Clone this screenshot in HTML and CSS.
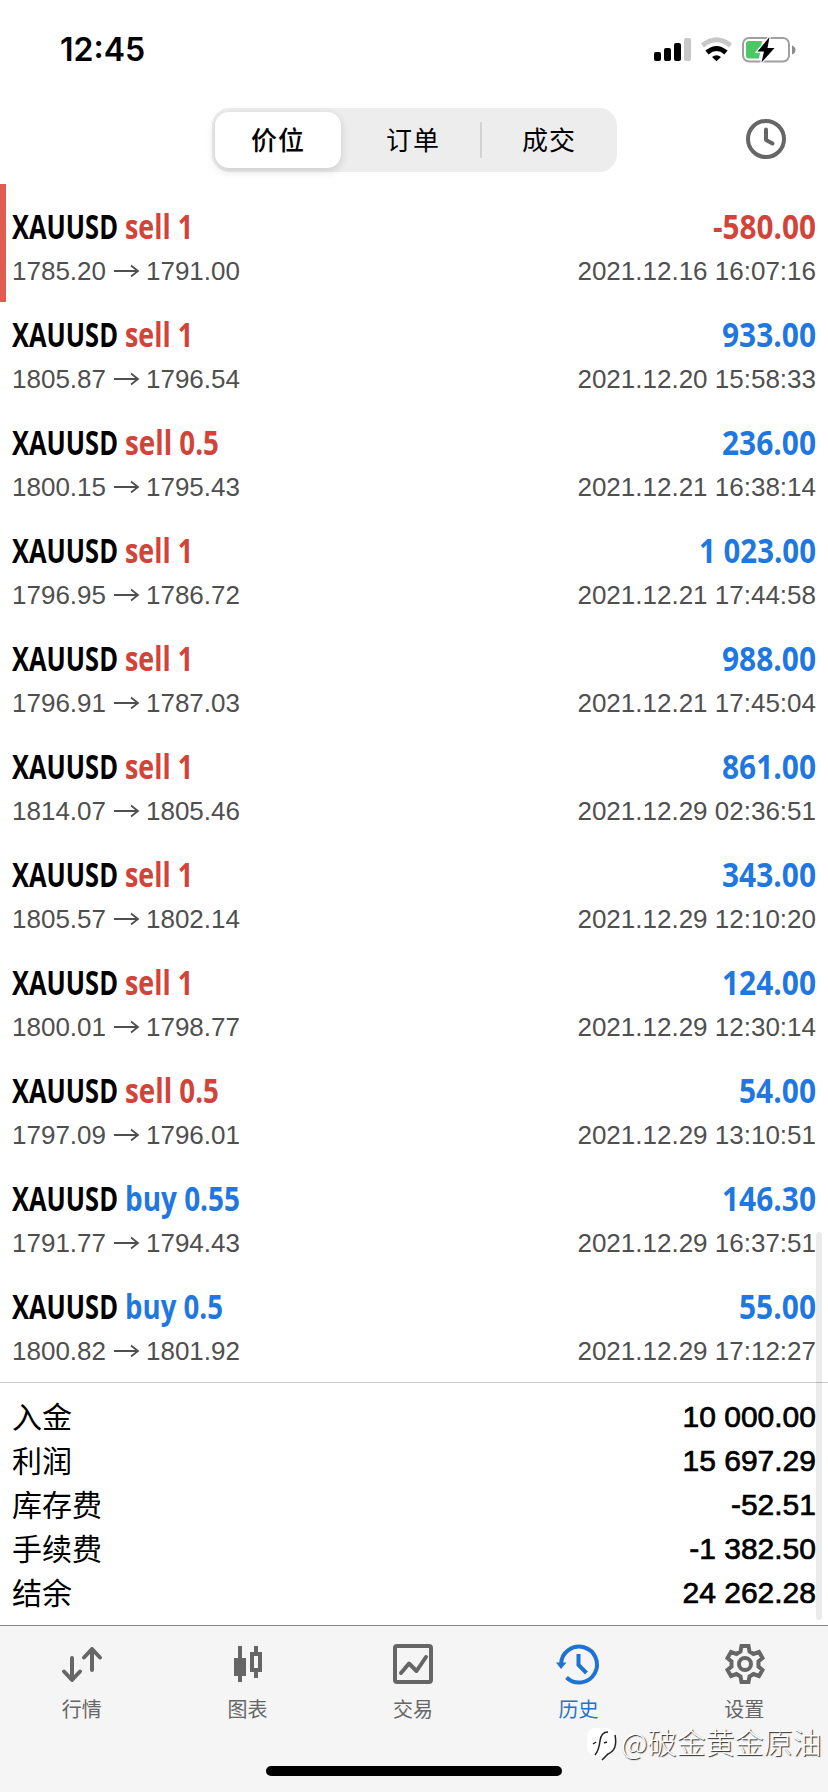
FILE: index.html
```html
<!DOCTYPE html>
<html lang="zh-CN">
<head>
<meta charset="utf-8">
<title>历史</title>
<link rel="stylesheet" href="styles.css">
</head>
<body>
<div class="screen">
  <div class="status">
    <span class="time">12:45</span>
    <svg class="status-icons" width="144" height="30" viewBox="0 0 144 30">
      <rect x="1" y="17" width="7" height="9" rx="2"/>
      <rect x="11" y="13" width="7" height="13" rx="2"/>
      <rect x="21" y="8" width="7" height="18" rx="2"/>
      <rect x="31" y="3" width="7" height="23" rx="2" fill="#c8c8c8"/>
      <path d="M49.5 10.500Q63.500 -1 77.500 10.500" fill="none" stroke="#c8c8c8" stroke-width="5"/>
      <path d="M54 17.500Q63.500 9.500 73 17.500" fill="none" stroke="#000" stroke-width="5"/>
      <path d="M59 22Q63.500 18.500 68 22L63.500 26.200Z"/>
      <rect x="90" y="3" width="46" height="23.500" rx="6" fill="#fff" stroke="#a0a0a0" stroke-width="2"/>
      <path d="M96 6H109L106 23.500H96Q93 23.500 93 20V9Q93 6 96 6Z" fill="#4cc764"/>
      <path d="M139 10.500Q142.500 12 142.500 15Q142.500 18 139 19.500Z" fill="#8d8d8d"/>
      <path d="M116.500 2L104.500 16.500H111L108.500 27.500L121.500 13H114.500Z" stroke="#fff" stroke-width="2.500" paint-order="stroke"/>
    </svg>
  </div>
  <div class="toolbar">
    <div class="segments">
      <span class="segment active">价位</span>
      <span class="segment">订单</span>
      <i class="divider"></i>
      <span class="segment">成交</span>
    </div>
    <svg class="clock" width="40" height="40" viewBox="0 0 40 40" fill="none" stroke="#666" stroke-width="4">
      <circle cx="20" cy="20" r="18"/>
      <path d="M20 10.500V21L26.500 24.500" stroke-linecap="round" stroke-linejoin="round"/>
    </svg>
  </div>

  <div class="deals">
    <div class="deal first loss">
      <svg class="name" width="300" height="48"><text x="12" y="34" textLength="106" lengthAdjust="spacingAndGlyphs">XAUUSD</text><text class="sell" x="125" y="34" textLength="68" lengthAdjust="spacingAndGlyphs">sell 1</text></svg>
      <svg class="profit" width="160" height="48"><text class="sell" x="45" y="34" textLength="103" lengthAdjust="spacingAndGlyphs">-580.00</text></svg>
      <div class="prices">1785.20<svg class="arrow" viewBox="0 0 26 14"><path d="M0 7H24M17 1.500L24 7L17 12.500"/></svg>1791.00</div>
      <div class="date">2021.12.16 16:07:16</div>
    </div>
    <div class="deal">
      <svg class="name" width="300" height="48"><text x="12" y="34" textLength="106" lengthAdjust="spacingAndGlyphs">XAUUSD</text><text class="sell" x="125" y="34" textLength="68" lengthAdjust="spacingAndGlyphs">sell 1</text></svg>
      <svg class="profit" width="160" height="48"><text class="buy" x="54" y="34" textLength="94" lengthAdjust="spacingAndGlyphs">933.00</text></svg>
      <div class="prices">1805.87<svg class="arrow" viewBox="0 0 26 14"><path d="M0 7H24M17 1.500L24 7L17 12.500"/></svg>1796.54</div>
      <div class="date">2021.12.20 15:58:33</div>
    </div>
    <div class="deal">
      <svg class="name" width="300" height="48"><text x="12" y="34" textLength="106" lengthAdjust="spacingAndGlyphs">XAUUSD</text><text class="sell" x="125" y="34" textLength="94" lengthAdjust="spacingAndGlyphs">sell 0.5</text></svg>
      <svg class="profit" width="160" height="48"><text class="buy" x="54" y="34" textLength="94" lengthAdjust="spacingAndGlyphs">236.00</text></svg>
      <div class="prices">1800.15<svg class="arrow" viewBox="0 0 26 14"><path d="M0 7H24M17 1.500L24 7L17 12.500"/></svg>1795.43</div>
      <div class="date">2021.12.21 16:38:14</div>
    </div>
    <div class="deal">
      <svg class="name" width="300" height="48"><text x="12" y="34" textLength="106" lengthAdjust="spacingAndGlyphs">XAUUSD</text><text class="sell" x="125" y="34" textLength="68" lengthAdjust="spacingAndGlyphs">sell 1</text></svg>
      <svg class="profit" width="160" height="48"><text class="buy" x="31" y="34" textLength="117" lengthAdjust="spacingAndGlyphs">1 023.00</text></svg>
      <div class="prices">1796.95<svg class="arrow" viewBox="0 0 26 14"><path d="M0 7H24M17 1.500L24 7L17 12.500"/></svg>1786.72</div>
      <div class="date">2021.12.21 17:44:58</div>
    </div>
    <div class="deal">
      <svg class="name" width="300" height="48"><text x="12" y="34" textLength="106" lengthAdjust="spacingAndGlyphs">XAUUSD</text><text class="sell" x="125" y="34" textLength="68" lengthAdjust="spacingAndGlyphs">sell 1</text></svg>
      <svg class="profit" width="160" height="48"><text class="buy" x="54" y="34" textLength="94" lengthAdjust="spacingAndGlyphs">988.00</text></svg>
      <div class="prices">1796.91<svg class="arrow" viewBox="0 0 26 14"><path d="M0 7H24M17 1.500L24 7L17 12.500"/></svg>1787.03</div>
      <div class="date">2021.12.21 17:45:04</div>
    </div>
    <div class="deal">
      <svg class="name" width="300" height="48"><text x="12" y="34" textLength="106" lengthAdjust="spacingAndGlyphs">XAUUSD</text><text class="sell" x="125" y="34" textLength="68" lengthAdjust="spacingAndGlyphs">sell 1</text></svg>
      <svg class="profit" width="160" height="48"><text class="buy" x="54" y="34" textLength="94" lengthAdjust="spacingAndGlyphs">861.00</text></svg>
      <div class="prices">1814.07<svg class="arrow" viewBox="0 0 26 14"><path d="M0 7H24M17 1.500L24 7L17 12.500"/></svg>1805.46</div>
      <div class="date">2021.12.29 02:36:51</div>
    </div>
    <div class="deal">
      <svg class="name" width="300" height="48"><text x="12" y="34" textLength="106" lengthAdjust="spacingAndGlyphs">XAUUSD</text><text class="sell" x="125" y="34" textLength="68" lengthAdjust="spacingAndGlyphs">sell 1</text></svg>
      <svg class="profit" width="160" height="48"><text class="buy" x="54" y="34" textLength="94" lengthAdjust="spacingAndGlyphs">343.00</text></svg>
      <div class="prices">1805.57<svg class="arrow" viewBox="0 0 26 14"><path d="M0 7H24M17 1.500L24 7L17 12.500"/></svg>1802.14</div>
      <div class="date">2021.12.29 12:10:20</div>
    </div>
    <div class="deal">
      <svg class="name" width="300" height="48"><text x="12" y="34" textLength="106" lengthAdjust="spacingAndGlyphs">XAUUSD</text><text class="sell" x="125" y="34" textLength="68" lengthAdjust="spacingAndGlyphs">sell 1</text></svg>
      <svg class="profit" width="160" height="48"><text class="buy" x="54" y="34" textLength="94" lengthAdjust="spacingAndGlyphs">124.00</text></svg>
      <div class="prices">1800.01<svg class="arrow" viewBox="0 0 26 14"><path d="M0 7H24M17 1.500L24 7L17 12.500"/></svg>1798.77</div>
      <div class="date">2021.12.29 12:30:14</div>
    </div>
    <div class="deal">
      <svg class="name" width="300" height="48"><text x="12" y="34" textLength="106" lengthAdjust="spacingAndGlyphs">XAUUSD</text><text class="sell" x="125" y="34" textLength="94" lengthAdjust="spacingAndGlyphs">sell 0.5</text></svg>
      <svg class="profit" width="160" height="48"><text class="buy" x="71" y="34" textLength="77" lengthAdjust="spacingAndGlyphs">54.00</text></svg>
      <div class="prices">1797.09<svg class="arrow" viewBox="0 0 26 14"><path d="M0 7H24M17 1.500L24 7L17 12.500"/></svg>1796.01</div>
      <div class="date">2021.12.29 13:10:51</div>
    </div>
    <div class="deal">
      <svg class="name" width="300" height="48"><text x="12" y="34" textLength="106" lengthAdjust="spacingAndGlyphs">XAUUSD</text><text class="buy" x="125" y="34" textLength="115" lengthAdjust="spacingAndGlyphs">buy 0.55</text></svg>
      <svg class="profit" width="160" height="48"><text class="buy" x="54" y="34" textLength="94" lengthAdjust="spacingAndGlyphs">146.30</text></svg>
      <div class="prices">1791.77<svg class="arrow" viewBox="0 0 26 14"><path d="M0 7H24M17 1.500L24 7L17 12.500"/></svg>1794.43</div>
      <div class="date">2021.12.29 16:37:51</div>
    </div>
    <div class="deal">
      <svg class="name" width="300" height="48"><text x="12" y="34" textLength="106" lengthAdjust="spacingAndGlyphs">XAUUSD</text><text class="buy" x="125" y="34" textLength="98" lengthAdjust="spacingAndGlyphs">buy 0.5</text></svg>
      <svg class="profit" width="160" height="48"><text class="buy" x="71" y="34" textLength="77" lengthAdjust="spacingAndGlyphs">55.00</text></svg>
      <div class="prices">1800.82<svg class="arrow" viewBox="0 0 26 14"><path d="M0 7H24M17 1.500L24 7L17 12.500"/></svg>1801.92</div>
      <div class="date">2021.12.29 17:12:27</div>
    </div>
  </div>

  <div class="totals">
    <div class="total"><span>入金</span><span class="sum">10 000.00</span></div>
    <div class="total"><span>利润</span><span class="sum">15 697.29</span></div>
    <div class="total"><span>库存费</span><span class="sum">-52.51</span></div>
    <div class="total"><span>手续费</span><span class="sum">-1 382.50</span></div>
    <div class="total"><span>结余</span><span class="sum">24 262.28</span></div>
  </div>

  <div class="tabs">
    <div class="tab">
      <svg width="44" height="44" viewBox="0 0 44 44" fill="none" stroke="#666" stroke-width="4" stroke-linecap="round" stroke-linejoin="round"><path d="M11 16V37M3 29.500L11 38L19 29.500M31 28V7M23 15.500L31 7L39 15.500"/></svg>
      <span>行情</span>
    </div>
    <div class="tab">
      <svg width="44" height="44" viewBox="0 0 44 44" fill="#666"><path d="M12 4H16V16H20V34H16V40H12V34H8V16H12ZM28 4H32V10H36V30H32V36H28V30H24V10H28ZM28 14V26H32V14Z" fill-rule="evenodd"/></svg>
      <span>图表</span>
    </div>
    <div class="tab">
      <svg width="44" height="44" viewBox="0 0 44 44" fill="none" stroke="#666" stroke-width="4" stroke-linejoin="round"><rect x="3" y="4" width="36" height="36" rx="2"/><path d="M9 31L17 21.500L24.500 29L34 15" stroke-linecap="round"/></svg>
      <span>交易</span>
    </div>
    <div class="tab current">
      <svg width="44" height="44" viewBox="0 0 44 44" fill="none" stroke="#1e73d2" stroke-width="4"><path d="M3 22A18 18 0 1 1 8.500 35.500M20.500 12V23L28.500 31"/><path d="M-2 20.500H8.500L3 27Z" fill="#1e73d2" stroke="none"/></svg>
      <span>历史</span>
    </div>
    <div class="tab">
      <svg width="44" height="44" viewBox="0 0 44 44" fill="none" stroke="#666" stroke-width="4"><path d="M18.500 4H25.500L26.500 9.500L30.500 12L36 10L39.500 16L35.500 19.500V24.500L39.500 28L36 34L30.500 32L26.500 34.500L25.500 40H18.500L17.500 34.500L13.500 32L8 34L4.500 28L8.500 24.500V19.500L4.500 16L8 10L13.500 12L17.500 9.500Z"/><circle cx="22" cy="22" r="6"/></svg>
      <span>设置</span>
    </div>
  </div>

  <div class="home"></div>
  <div class="scrollbar"></div>
  <div class="watermark">
    <svg width="32" height="34" viewBox="0 0 32 34"><path d="M8 0H20Q29 1 29 10V16Q28 26 20 28L16 33L15 28H8Q0 26 0 18V9Q0 1 8 0Z" fill="#fff"/><path d="M21 4Q14 4 13 13Q12 22 8 27M6 16L9 14M17 15L20 14M28 7Q31 22 21 26L15 32" fill="none" stroke="#222" stroke-width="1.500"/></svg>
    <span>@破金黄金原油</span>
  </div>
</div>
</body>
</html>
```
FILE: styles.css
```css
* { box-sizing: border-box; }
body { margin: 0; background: #fff; }
svg { display: block; overflow: visible; }
.screen {
  position: relative;
  display: flex;
  flex-direction: column;
  width: 828px;
  height: 1792px;
  overflow: hidden;
  color: #000;
  font-family: "Liberation Sans", "Noto Sans CJK SC", sans-serif;
}
.status {
  display: flex;
  justify-content: space-between;
  height: 108px;
  padding: 30px 31px 0 60px;
}
.time {
  font: 600 32px/40px Inter, sans-serif;
}
.status-icons { margin-top: 5px; }
.toolbar {
  display: flex;
  justify-content: space-between;
  height: 76px;
  padding: 0 42px 0 212px;
}
.segments {
  display: flex;
  align-items: center;
  width: 405px;
  height: 64px;
  padding: 4px 1px 4px 3px;
  border-radius: 18px;
  background: #ededed;
}
.segment {
  flex: 1;
  height: 56px;
  font: 400 26px/54px "Noto Sans CJK SC", sans-serif;
  letter-spacing: 1px;
  text-align: center;
}
.segment.active {
  flex: none;
  width: 126px;
  margin-right: 5px;
  border-radius: 14px;
  background: #fff;
  box-shadow: 0 3px 10px rgba(0, 0, 0, 0.14);
  font-weight: 500;
}
.divider { width: 2px; height: 36px; background: #d2d2d2; }
.clock { margin-top: 11px; }
.deal {
  position: relative;
  display: grid;
  grid-template-columns: 1fr auto;
  grid-template-rows: 48px 36px;
  height: 108px;
  padding-top: 11px;
}
.deal.first { height: 118px; padding-top: 21px; }
.loss::before {
  content: "";
  position: absolute;
  left: 0;
  top: 0;
  width: 6px;
  height: 118px;
  background: #e05b50;
}
.name text { font: 700 34px "Open Sans", sans-serif; }
.profit { justify-self: end; }
.profit text { font: 700 34px "Open Sans", sans-serif; }
.sell { fill: #d2443a; }
.buy { fill: #1f78e0; }
.prices, .date {
  color: #4f4f4f;
  font-size: 26px;
  line-height: 36px;
}
.prices { display: flex; align-items: center; padding-left: 12px; }
.date { padding-right: 12px; text-align: right; }
.arrow {
  width: 26px;
  height: 14px;
  margin: 0 6px 0 8px;
  fill: none;
  stroke: #4f4f4f;
  stroke-width: 1.8;
}
.totals {
  height: 243px;
  padding: 10px 12px 0;
  border-top: 1px solid #c8c8c8;
}
.total {
  display: flex;
  justify-content: space-between;
  height: 44px;
  font: 400 30px/44px "Noto Sans CJK SC", sans-serif;
}
.sum {
  padding-top: 2px;
  font-family: "Liberation Sans", sans-serif;
  -webkit-text-stroke: 0.7px #000;
}
.tabs {
  display: flex;
  height: 167px;
  padding-top: 16px;
  border-top: 1px solid #858585;
  background: #f5f5f5;
}
.tab {
  display: flex;
  flex: 1;
  flex-direction: column;
  align-items: center;
  color: #666;
  font: 400 20px/30px "Noto Sans CJK SC", sans-serif;
}
.tab span { margin: 8px 2px 0 0; }
.tab.current { color: #1e73d2; }
.home {
  position: absolute;
  left: 266px;
  top: 1766px;
  width: 296px;
  height: 10px;
  border-radius: 5px;
  background: #000;
}
.scrollbar {
  position: absolute;
  left: 816px;
  top: 1232px;
  width: 6px;
  height: 388px;
  border-radius: 3px;
  background: rgba(0, 0, 0, 0.08);
}
.watermark {
  position: absolute;
  left: 587px;
  top: 1720px;
  display: flex;
  align-items: center;
  color: #fff;
  font: 300 29px/40px "Noto Sans CJK SC", sans-serif;
  text-shadow: 1px 1px 1px #222;
}
.watermark svg { margin-top: 8px; margin-right: 2px; }
```
